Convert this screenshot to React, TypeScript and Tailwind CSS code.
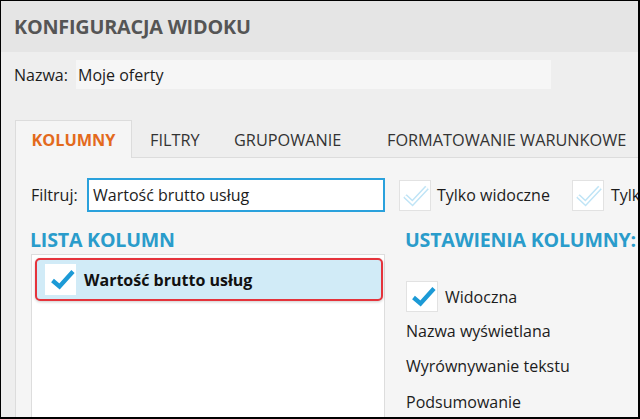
import React from "react";

const font = { fontFamily: '"Open Sans", "Noto Sans", sans-serif' };

function Check({ ghost = false }: { ghost?: boolean }) {
  if (ghost) {
    return (
      <svg width="30" height="29" viewBox="0 0 30 29">
        <polyline points="5,15 12.5,22 27,6.5" fill="none" stroke="#bfe4f6" strokeWidth="5" strokeLinejoin="miter" />
        <polyline points="5,15 12.5,22 27,6.5" fill="none" stroke="#ffffff" strokeWidth="2" strokeLinejoin="miter" />
      </svg>
    );
  }
  return (
    <svg width="30" height="29" viewBox="0 0 30 29">
      <polyline points="6.5,15.5 13.5,21.5 27,6.5" fill="none" stroke="#1c9ad6" strokeWidth="4.3" strokeLinejoin="miter" />
    </svg>
  );
}

function Box({ ghost = false }: { ghost?: boolean }) {
  return (
    <div className="w-[32px] h-[31px] bg-white border border-[#e2e2e2] flex items-center justify-center shrink-0">
      <Check ghost={ghost} />
    </div>
  );
}

export default function App() {
  return (
    <div
      className="w-[640px] h-[419px] overflow-hidden border-t border-l border-r-2 border-b-2 border-black flex flex-col bg-[#eeeeee] text-[#1c1c1c] text-[16px]"
      style={font}
    >
      <div className="h-[51px] shrink-0 bg-[#e5e5e5] flex items-center pl-[13px]">
        <span className="text-[19.8px] font-bold text-[#555] tracking-[-0.2px]">KONFIGURACJA WIDOKU</span>
      </div>
      <div className="flex-1 flex flex-col min-h-0">
        <div className="mt-[8px] flex items-center h-[29px]">
          <span className="ml-[13px] w-[62px] shrink-0">Nazwa:</span>
          <div className="h-[29px] w-[475px] shrink-0 bg-[#f6f6f6] flex items-center pl-[2px]">Moje oferty</div>
        </div>
        <div className="mt-[31px] ml-[14px] flex items-end h-[38px] relative">
          <div className="h-[38px] w-[117px] shrink-0 border border-b-0 border-[#dcdcdc] bg-[#f5f5f5] flex items-center justify-center pt-[2px] text-[16.3px] font-bold text-[#e36a1d] relative z-10">
            KOLUMNY
          </div>
          <div className="flex-1 h-[37px] border-b border-[#dcdcdc] flex items-center pt-[2px] text-[16.3px] text-[#333] whitespace-nowrap">
            <span className="ml-[18px] w-[84px] shrink-0">FILTRY</span>
            <span className="w-[153px] shrink-0">GRUPOWANIE</span>
            <span className="shrink-0">FORMATOWANIE WARUNKOWE</span>
          </div>
        </div>
        <div className="ml-[14px] flex-1 bg-[#f5f5f5] border-l border-[#dcdcdc] flex flex-col min-h-0 overflow-hidden">
          <div className="mt-[20px] flex items-center h-[34px] whitespace-nowrap">
            <span className="ml-[15px] w-[56px] shrink-0">Filtruj:</span>
            <div className="w-[298px] h-[34px] shrink-0 bg-white border-2 border-[#2aa1dc] flex items-center pl-[4px]">
              Wartość brutto usług
            </div>
            <div className="ml-[14px] shrink-0">
              <Box ghost />
            </div>
            <span className="ml-[6px] shrink-0">Tylko widoczne</span>
            <div className="ml-[22px] shrink-0">
              <Box ghost />
            </div>
            <span className="ml-[7px] shrink-0">Tylko</span>
          </div>
          <div className="flex flex-1 min-h-0 mt-[16px]">
            <div className="w-[354px] shrink-0 ml-[15px] flex flex-col">
              <div className="text-[19.6px] font-bold text-[#2a9ccb] leading-[24px] tracking-[-0.2px] -ml-[1px]">LISTA KOLUMN</div>
              <div className="mt-[2px] flex-1 bg-white border border-[#dddddd] border-b-0 pt-[3px] pl-[3px] pr-[1px]">
                <div className="h-[43px] bg-[#d1ebf7] border-2 border-[#e5333b] rounded-[5px] shadow-[0_1px_3px_rgba(0,0,0,0.2)] flex items-center pl-[8px]">
                  <div className="w-[31px] h-[31px] bg-white flex items-center justify-center">
                    <Check />
                  </div>
                  <span className="ml-[8px] font-bold text-[#111]">Wartość brutto usług</span>
                </div>
              </div>
            </div>
            <div className="ml-[21px] flex flex-col whitespace-nowrap shrink-0">
              <div className="text-[19.6px] font-bold text-[#2a9ccb] leading-[24px] tracking-[-0.2px] -ml-[1px]">USTAWIENIA KOLUMNY:</div>
              <div className="mt-[29px] flex items-center">
                <Box />
                <span className="ml-[7px]">Widoczna</span>
              </div>
              <div className="mt-[5px] h-[28px] flex items-center">Nazwa wyświetlana</div>
              <div className="mt-[7px] h-[28px] flex items-center">Wyrównywanie tekstu</div>
              <div className="mt-[8px] h-[28px] flex items-center">Podsumowanie</div>
            </div>
          </div>
        </div>
      </div>
    </div>
  );
}
